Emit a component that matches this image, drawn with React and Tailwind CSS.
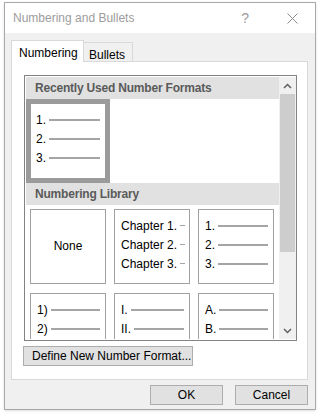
import React from 'react';

const NumRow = ({ label, short }) => (
  <div className="flex items-center h-[19px]">
    <span className="leading-none whitespace-nowrap">{label}</span>
    {short ? (
      <span className="w-[5px] h-[1px] bg-[#a5a5a5] ml-[3px]" />
    ) : (
      <span className="flex-1 h-[2px] bg-[#a5a5a5] ml-[3px]" />
    )}
  </div>
);

// library tile, rows start near the top so the clipped ones just fall away
const LibBox = ({ rows, short, pr = 'pr-[5px]' }) => (
  <div className={`w-[76px] h-[75px] border border-[#a0a0a0] bg-white flex flex-col pt-[6px] pl-[6px] ${pr}`}>
    {rows.map((r) => <NumRow key={r} label={r} short={short} />)}
  </div>
);

export default function App() {
  return (
    <div className="w-[318px] h-[415px] bg-white overflow-hidden pl-[4px] pt-[2px] font-['Liberation_Sans',Arial,sans-serif] text-[12px] text-black">
      <div className="w-[312px] h-[408px] border border-[#a8a8a8] flex flex-col shadow">
        {/* title bar */}
        <div className="h-[30px] bg-white flex items-center pl-[8px] shrink-0">
          <span className="text-[#9c9c9c] text-[12px]">Numbering and Bullets</span>
          <span className="ml-auto text-[#9c9c9c] text-[14px] mr-[38px]">?</span>
          <svg width="11" height="11" viewBox="0 0 11 11" className="mr-[17px]">
            <path d="M0.5 0.5 L10.5 10.5 M10.5 0.5 L0.5 10.5" stroke="#8a8a8a" strokeWidth="1" />
          </svg>
        </div>

        {/* body */}
        <div className="flex-1 bg-[#f0f0f0] pl-[6px] pr-[7px] pt-[7px] flex flex-col">
          {/* tabs */}
          <div className="flex items-end h-[21px] relative z-10">
            <div className="h-[22px] w-[73px] bg-white border border-b-0 border-[#d9d9d9] pl-[7px] pt-[3px] -mb-[1px]">
              Numbering
            </div>
            <div className="h-[20px] w-[49px] bg-[#f0f0f0] border border-l-0 border-[#d9d9d9] pl-[5px] pt-[3px] mb-[-1px]">
              Bullets
            </div>
          </div>

          {/* panel */}
          <div className="h-[319px] bg-white border border-[#d9d9d9] pl-[12px] pt-[13px] flex flex-col">
            <div className="w-[273px] h-[266px] border border-[#828282] flex p-[1px] pr-0 shrink-0">
              {/* list content */}
              <div className="w-[253px] h-full overflow-hidden flex flex-col">
                <div className="h-[22px] bg-[#e1e1e1] flex items-center pl-[9px] font-bold text-[#5a5a5a] shrink-0 tracking-[-0.2px]">
                  Recently Used Number Formats
                </div>
                <div className="h-[84px] shrink-0">
                  <div className="w-[84px] h-[84px] border-[5px] border-[#9b9b9b] bg-white flex flex-col justify-center pb-[4px] pl-[5px] pr-[5px]">
                    <NumRow label="1." />
                    <NumRow label="2." />
                    <NumRow label="3." />
                  </div>
                </div>
                <div className="h-[22px] bg-[#e1e1e1] flex items-center pl-[9px] font-bold text-[#5a5a5a] shrink-0 tracking-[-0.2px]">
                  Numbering Library
                </div>
                <div className="grid grid-cols-[76px_76px_76px] gap-x-[8px] gap-y-[9px] pl-[4px] pt-[4px]">
                  <div className="w-[76px] h-[75px] border border-[#a0a0a0] bg-white flex items-center justify-center pb-[2px]">
                    None
                  </div>
                  <LibBox rows={['Chapter 1.', 'Chapter 2.', 'Chapter 3.']} short pr="pr-0" />
                  <LibBox rows={['1.', '2.', '3.']} />
                  <LibBox rows={['1)', '2)']} />
                  <LibBox rows={['I.', 'II.']} />
                  <LibBox rows={['A.', 'B.']} />
                </div>
              </div>

              {/* scrollbar */}
              <div className="w-[17px] h-full bg-[#f0f0f0] flex flex-col">
                <div className="h-[17px] flex items-center justify-center shrink-0">
                  <svg width="9" height="6" viewBox="0 0 9 6">
                    <path d="M1 5 L4.5 1.5 L8 5" stroke="#606060" strokeWidth="1.5" fill="none" />
                  </svg>
                </div>
                <div className="h-[158px] mx-[1px] bg-[#cdcdcd] shrink-0" />
                <div className="flex-1" />
                <div className="h-[17px] flex items-center justify-center shrink-0">
                  <svg width="9" height="6" viewBox="0 0 9 6">
                    <path d="M1 1 L4.5 4.5 L8 1" stroke="#606060" strokeWidth="1.5" fill="none" />
                  </svg>
                </div>
              </div>
            </div>

            <button className="mt-[5px] -ml-[1px] w-[170px] h-[20px] shrink-0 bg-[#e1e1e1] border border-[#adadad] text-left pl-[8px] leading-none whitespace-nowrap">
              Define New Number Format...
            </button>
          </div>

          {/* footer buttons */}
          <div className="flex justify-end gap-[12px] pt-[5px]">
            <button className="w-[73px] h-[20px] bg-[#e1e1e1] border border-[#adadad] leading-none">OK</button>
            <button className="w-[73px] h-[20px] bg-[#e1e1e1] border border-[#adadad] leading-none">Cancel</button>
          </div>
        </div>
      </div>
    </div>
  );
}
